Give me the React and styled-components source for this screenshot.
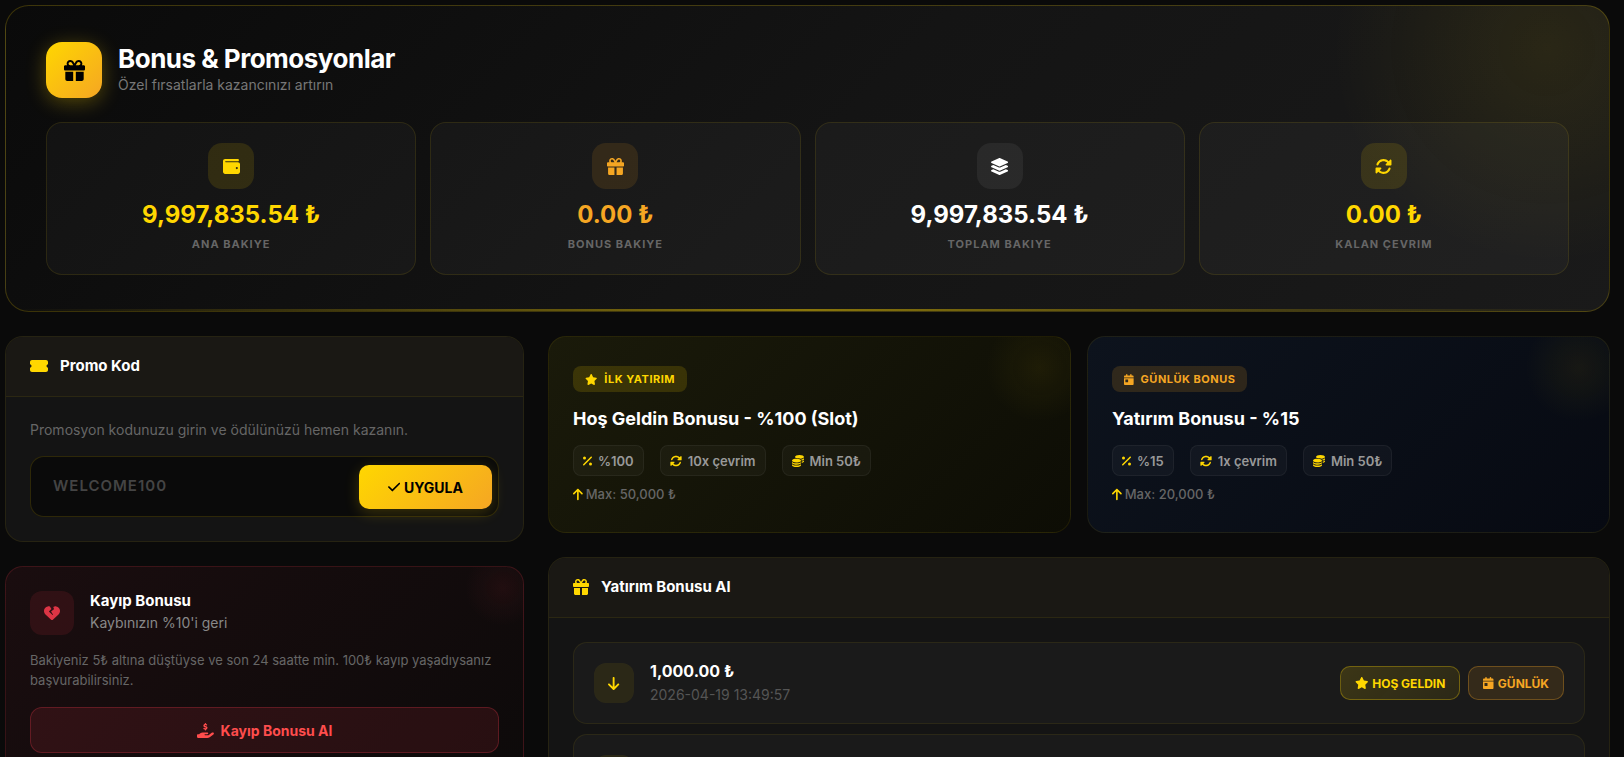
import React from "react";
import styled, { createGlobalStyle } from "styled-components";
import {
  FaArrowDown,
  FaArrowUp,
  FaCalendarDay,
  FaCheck,
  FaCoins,
  FaGift,
  FaHandHoldingDollar,
  FaHeartCrack,
  FaLayerGroup,
  FaPercent,
  FaRotate,
  FaStar,
  FaTicketSimple,
  FaWallet,
} from "react-icons/fa6";

const GlobalStyle = createGlobalStyle`
  *, *::before, *::after { box-sizing: border-box; }
  body {
    margin: 0;
    background: #0a0a0a;
    color: #fff;
    font-family: Inter, "Liberation Sans", sans-serif;
    font-size: 14px;
    line-height: 20px;
  }
  h1, h2, h3, p { margin: 0; }
  button, input { font-family: inherit; }
  button { cursor: pointer; }
  svg { display: block; flex-shrink: 0; }

  /* Icons keep the aspect ratio of their own view box at a height of 1em. */
  svg[viewBox="0 0 576 512"] { width: 1.125em; }
  svg[viewBox="0 0 448 512"] { width: 0.875em; }
  svg[viewBox="0 0 384 512"] { width: 0.75em; }
`;

const gold = "#ffd700";
const orange = "#f5a623";
const goldGradient = `linear-gradient(135deg, ${gold}, ${orange})`;

const Page = styled.main`
  padding: 5px 14px 24px 5px;
  display: flex;
  flex-direction: column;
  gap: 24px;
`;

const Hero = styled.section`
  position: relative;
  overflow: hidden;
  padding: 36px 40px;
  border: 1px solid rgba(255, 215, 0, 0.2);
  border-radius: 24px;
  background:
    radial-gradient(circle 215px at calc(100% - 62px) 42px, rgba(255, 215, 0, 0.08), transparent),
    linear-gradient(135deg, #0a0a0a, #141414 50%, #1a1a1a);

  &::after {
    content: "";
    position: absolute;
    left: 0;
    right: 0;
    bottom: 0;
    height: 2px;
    background: linear-gradient(90deg, transparent, ${gold}, transparent);
    opacity: 0.5;
  }
`;

const HeroHeader = styled.header`
  display: flex;
  align-items: center;
  gap: 16px;
  margin-bottom: 24px;
`;

const HeroIcon = styled.div`
  display: grid;
  place-items: center;
  width: 56px;
  height: 56px;
  border-radius: 16px;
  background: ${goldGradient};
  box-shadow: 0 4px 20px rgba(255, 215, 0, 0.3);
  color: #000;
  font-size: 21px;
`;

const HeroTitle = styled.h1`
  font-size: 26px;
  line-height: 30px;
  font-weight: 700;
  letter-spacing: -0.5px;
`;

const HeroSubtitle = styled.p`
  color: #777;
  line-height: 22px;
`;

const Stats = styled.div`
  display: grid;
  grid-template-columns: repeat(4, 1fr);
  gap: 14px;
`;

const StatCard = styled.article`
  display: flex;
  flex-direction: column;
  align-items: center;
  padding: 20px;
  border: 1px solid rgba(255, 215, 0, 0.1);
  border-radius: 16px;
  background: rgba(255, 255, 255, 0.03);
`;

const statTones = {
  gold: { color: gold, tile: "rgba(255, 215, 0, 0.12)" },
  orange: { color: orange, tile: "rgba(245, 166, 35, 0.12)" },
  white: { color: "#fff", tile: "rgba(255, 255, 255, 0.06)" },
};

const StatIcon = styled.div`
  display: grid;
  place-items: center;
  width: 46px;
  height: 46px;
  margin-bottom: 13px;
  border-radius: 14px;
  background: ${({ $tone }) => statTones[$tone].tile};
  color: ${({ $tone }) => statTones[$tone].color};
  font-size: 17px;
`;

const StatValue = styled.div`
  margin-bottom: 6px;
  color: ${({ $tone }) => statTones[$tone].color};
  font-size: 24px;
  line-height: 26px;
  font-weight: 700;
`;

const StatLabel = styled.div`
  color: #666;
  font-size: 11px;
  font-weight: 700;
  letter-spacing: 1px;
`;

const Columns = styled.div`
  display: flex;
  align-items: flex-start;
  gap: 24px;
`;

const Sidebar = styled.div`
  flex: 0 0 calc(33.333% - 16px);
  min-width: 0;
  display: flex;
  flex-direction: column;
  gap: 24px;
`;

const MainColumn = styled.div`
  flex: 1;
  min-width: 0;
  display: flex;
  flex-direction: column;
  gap: 24px;
`;

const Panel = styled.section`
  border: 1px solid rgba(255, 215, 0, 0.08);
  border-radius: 18px;
  background: #141414;
  overflow: hidden;
`;

const PanelHeader = styled.header`
  display: flex;
  align-items: center;
  gap: 12px;
  padding: 17px 24px 19px;
  border-bottom: 1px solid rgba(255, 215, 0, 0.08);
  background: #1a1814;

  svg { color: ${gold}; font-size: 16px; }
`;

const PanelTitle = styled.h2`
  font-size: 15px;
  line-height: 23px;
  font-weight: 700;
`;

const PanelBody = styled.div`
  padding: 24px;
`;

const PromoText = styled.label`
  display: block;
  margin-bottom: 17px;
  color: #666;
  line-height: 18px;
`;

const PromoForm = styled.form`
  display: flex;
  align-items: center;
  padding: 8px 6px 7px;
  border: 1px solid rgba(255, 215, 0, 0.15);
  border-radius: 14px;
  background: #0a0a0a;
`;

const PromoInput = styled.input`
  flex: 1;
  min-width: 0;
  height: 44px;
  padding: 0 16px 4px;
  border: 0;
  outline: 0;
  background: transparent;
  color: #fff;
  font-size: 15px;
  font-weight: 600;
  letter-spacing: 1px;

  &::placeholder { color: #444; }
`;

const ApplyButton = styled.button`
  display: flex;
  align-items: center;
  gap: 4px;
  height: 44px;
  padding: 0 29px;
  border: 0;
  border-radius: 10px;
  background: ${goldGradient};
  box-shadow: 0 4px 15px rgba(255, 215, 0, 0.2);
  color: #000;
  font-size: 14px;
  font-weight: 700;
`;

const LossCard = styled.section`
  padding: 24px;
  border: 1px solid rgba(220, 53, 69, 0.2);
  border-radius: 18px;
  background:
    radial-gradient(circle 38px at calc(100% - 20px) 21px, rgba(220, 53, 69, 0.08), transparent),
    linear-gradient(135deg, #1a0d0f, #0d0a0a);
`;

const LossHeader = styled.header`
  display: flex;
  gap: 16px;
  margin-bottom: 15px;
`;

const LossIcon = styled.div`
  display: grid;
  place-items: center;
  width: 44px;
  height: 44px;
  border-radius: 12px;
  background: rgba(220, 53, 69, 0.12);
  color: #dc3545;
  font-size: 16px;
`;

const LossTitle = styled.h2`
  font-size: 15px;
  line-height: 20px;
  font-weight: 700;
`;

const LossSubtitle = styled.p`
  color: #888;
  line-height: 24px;
`;

const LossText = styled.p`
  margin-bottom: 17px;
  color: #666;
  font-size: 13px;
`;

const LossButton = styled.button`
  display: flex;
  align-items: center;
  justify-content: center;
  gap: 7px;
  width: 100%;
  height: 46px;
  border: 1px solid rgba(220, 53, 69, 0.3);
  border-radius: 12px;
  background: rgba(220, 53, 69, 0.13);
  color: #ff4d4d;
  font-size: 14px;
  font-weight: 700;

  svg { font-size: 15px; }
`;

const Offers = styled.div`
  display: grid;
  grid-template-columns: 1fr 1fr;
  gap: 16px;
`;

const offerTones = {
  gold: {
    background: "linear-gradient(135deg, #1a1a0a, #0d0d05)",
    badge: "rgba(255, 215, 0, 0.15)",
    color: gold,
  },
  blue: {
    background: "linear-gradient(135deg, #0d131d, #070a12)",
    badge: "rgba(245, 166, 35, 0.15)",
    color: orange,
  },
};

const OfferCard = styled.article`
  display: flex;
  flex-direction: column;
  align-items: flex-start;
  padding: 29px 24px 28px;
  border: 1px solid rgba(255, 215, 0, 0.08);
  border-radius: 18px;
  background:
    radial-gradient(circle 54px at calc(100% - 30px) 31px, rgba(255, 215, 0, 0.06), transparent),
    ${({ $tone }) => offerTones[$tone].background};
`;

const OfferBadge = styled.div`
  display: flex;
  align-items: center;
  gap: 7px;
  height: 26px;
  margin-bottom: 15px;
  padding: 0 12px;
  border-radius: 8px;
  background: ${({ $tone }) => offerTones[$tone].badge};
  color: ${({ $tone }) => offerTones[$tone].color};
  font-size: 11px;
  font-weight: 700;
  letter-spacing: 0.5px;
`;

const OfferTitle = styled.h3`
  margin-bottom: 14px;
  font-size: 18px;
  line-height: 24px;
  font-weight: 700;
`;

const Chips = styled.ul`
  display: flex;
  gap: 16px;
  margin: 0 0 8px;
  padding: 0;
  list-style: none;
`;

const Chip = styled.li`
  display: flex;
  align-items: center;
  gap: 6px;
  height: 31px;
  padding: 0 9px;
  border: 1px solid rgba(255, 255, 255, 0.05);
  border-radius: 8px;
  background: rgba(255, 255, 255, 0.03);
  color: #999;
  font-size: 13px;
  font-weight: 600;

  svg { color: ${gold}; font-size: 12px; }
`;

const OfferLimit = styled.p`
  display: flex;
  align-items: center;
  gap: 3px;
  color: #666;
  font-size: 13px;
  font-weight: 500;

  svg { color: ${gold}; }
`;

const DepositList = styled.ul`
  display: flex;
  flex-direction: column;
  gap: 10px;
  margin: 0;
  padding: 0;
  list-style: none;
`;

const DepositRow = styled.li`
  display: flex;
  align-items: center;
  gap: 16px;
  min-height: 82px;
  padding: 16px 20px;
  border: 1px solid rgba(255, 215, 0, 0.08);
  border-radius: 14px;
  background: #1a1a1a;
`;

const DepositIcon = styled.div`
  display: grid;
  place-items: center;
  width: 40px;
  height: 40px;
  border-radius: 12px;
  background: rgba(255, 215, 0, 0.08);
  color: ${gold};
  font-size: 15px;
`;

const DepositInfo = styled.div`
  flex: 1;
  line-height: 24px;
`;

const DepositAmount = styled.div`
  font-size: 16px;
  font-weight: 700;
`;

const DepositDate = styled.time`
  display: block;
  color: #555;
`;

const Actions = styled.div`
  display: flex;
  gap: 8px;
`;

const actionTones = {
  gold: {
    color: gold,
    border: "rgba(255, 215, 0, 0.3)",
    background: "linear-gradient(135deg, rgba(255, 215, 0, 0.15), rgba(255, 215, 0, 0.08))",
  },
  orange: {
    color: orange,
    border: "rgba(245, 166, 35, 0.3)",
    background: "rgba(245, 166, 35, 0.12)",
  },
};

const ActionButton = styled.button`
  display: flex;
  align-items: center;
  gap: 4px;
  height: 34px;
  padding: 0 14px;
  border: 1px solid ${({ $tone }) => actionTones[$tone].border};
  border-radius: 10px;
  background: ${({ $tone }) => actionTones[$tone].background};
  color: ${({ $tone }) => actionTones[$tone].color};
  font-size: 12px;
  font-weight: 700;
`;

const stats = [
  { tone: "gold", Icon: FaWallet, value: "9,997,835.54 ₺", label: "ANA BAKIYE" },
  { tone: "orange", Icon: FaGift, value: "0.00 ₺", label: "BONUS BAKIYE" },
  { tone: "white", Icon: FaLayerGroup, value: "9,997,835.54 ₺", label: "TOPLAM BAKIYE" },
  { tone: "gold", Icon: FaRotate, value: "0.00 ₺", label: "KALAN ÇEVRIM" },
];

const offers = [
  {
    tone: "gold",
    Icon: FaStar,
    badge: "İLK YATIRIM",
    title: "Hoş Geldin Bonusu - %100 (Slot)",
    rate: "%100",
    turnover: "10x çevrim",
    min: "Min 50₺",
    max: "Max: 50,000 ₺",
  },
  {
    tone: "blue",
    Icon: FaCalendarDay,
    badge: "GÜNLÜK BONUS",
    title: "Yatırım Bonusu - %15",
    rate: "%15",
    turnover: "1x çevrim",
    min: "Min 50₺",
    max: "Max: 20,000 ₺",
  },
];

export default function App() {
  return (
    <>
      <GlobalStyle />
      <Page>
        <Hero>
          <HeroHeader>
            <HeroIcon><FaGift /></HeroIcon>
            <div>
              <HeroTitle>Bonus &amp; Promosyonlar</HeroTitle>
              <HeroSubtitle>Özel fırsatlarla kazancınızı artırın</HeroSubtitle>
            </div>
          </HeroHeader>
          <Stats>
            {stats.map(({ tone, Icon, value, label }) => (
              <StatCard key={label}>
                <StatIcon $tone={tone}><Icon /></StatIcon>
                <StatValue $tone={tone}>{value}</StatValue>
                <StatLabel>{label}</StatLabel>
              </StatCard>
            ))}
          </Stats>
        </Hero>

        <Columns>
          <Sidebar>
            <Panel>
              <PanelHeader>
                <FaTicketSimple />
                <PanelTitle>Promo Kod</PanelTitle>
              </PanelHeader>
              <PanelBody>
                <PromoText htmlFor="promo-code">
                  Promosyon kodunuzu girin ve ödülünüzü hemen kazanın.
                </PromoText>
                <PromoForm onSubmit={(event) => event.preventDefault()}>
                  <PromoInput id="promo-code" type="text" placeholder="WELCOME100" />
                  <ApplyButton type="submit"><FaCheck />UYGULA</ApplyButton>
                </PromoForm>
              </PanelBody>
            </Panel>

            <LossCard>
              <LossHeader>
                <LossIcon><FaHeartCrack /></LossIcon>
                <div>
                  <LossTitle>Kayıp Bonusu</LossTitle>
                  <LossSubtitle>Kaybınızın %10'i geri</LossSubtitle>
                </div>
              </LossHeader>
              <LossText>
                Bakiyeniz 5₺ altına düştüyse ve son 24 saatte min. 100₺ kayıp yaşadıysanız
                başvurabilirsiniz.
              </LossText>
              <LossButton type="button"><FaHandHoldingDollar />Kayıp Bonusu Al</LossButton>
            </LossCard>
          </Sidebar>

          <MainColumn>
            <Offers>
              {offers.map(({ tone, Icon, badge, title, rate, turnover, min, max }) => (
                <OfferCard key={title} $tone={tone}>
                  <OfferBadge $tone={tone}><Icon />{badge}</OfferBadge>
                  <OfferTitle>{title}</OfferTitle>
                  <Chips>
                    <Chip><FaPercent />{rate}</Chip>
                    <Chip><FaRotate />{turnover}</Chip>
                    <Chip><FaCoins />{min}</Chip>
                  </Chips>
                  <OfferLimit><FaArrowUp />{max}</OfferLimit>
                </OfferCard>
              ))}
            </Offers>

            <Panel>
              <PanelHeader>
                <FaGift />
                <PanelTitle>Yatırım Bonusu Al</PanelTitle>
              </PanelHeader>
              <PanelBody>
                <DepositList>
                  <DepositRow>
                    <DepositIcon><FaArrowDown /></DepositIcon>
                    <DepositInfo>
                      <DepositAmount>1,000.00 ₺</DepositAmount>
                      <DepositDate dateTime="2026-04-19T13:49:57">2026-04-19 13:49:57</DepositDate>
                    </DepositInfo>
                    <Actions>
                      <ActionButton type="button" $tone="gold"><FaStar />HOŞ GELDIN</ActionButton>
                      <ActionButton type="button" $tone="orange"><FaCalendarDay />GÜNLÜK</ActionButton>
                    </Actions>
                  </DepositRow>
                  <DepositRow>
                    <DepositIcon><FaArrowDown /></DepositIcon>
                  </DepositRow>
                </DepositList>
              </PanelBody>
            </Panel>
          </MainColumn>
        </Columns>
      </Page>
    </>
  );
}
